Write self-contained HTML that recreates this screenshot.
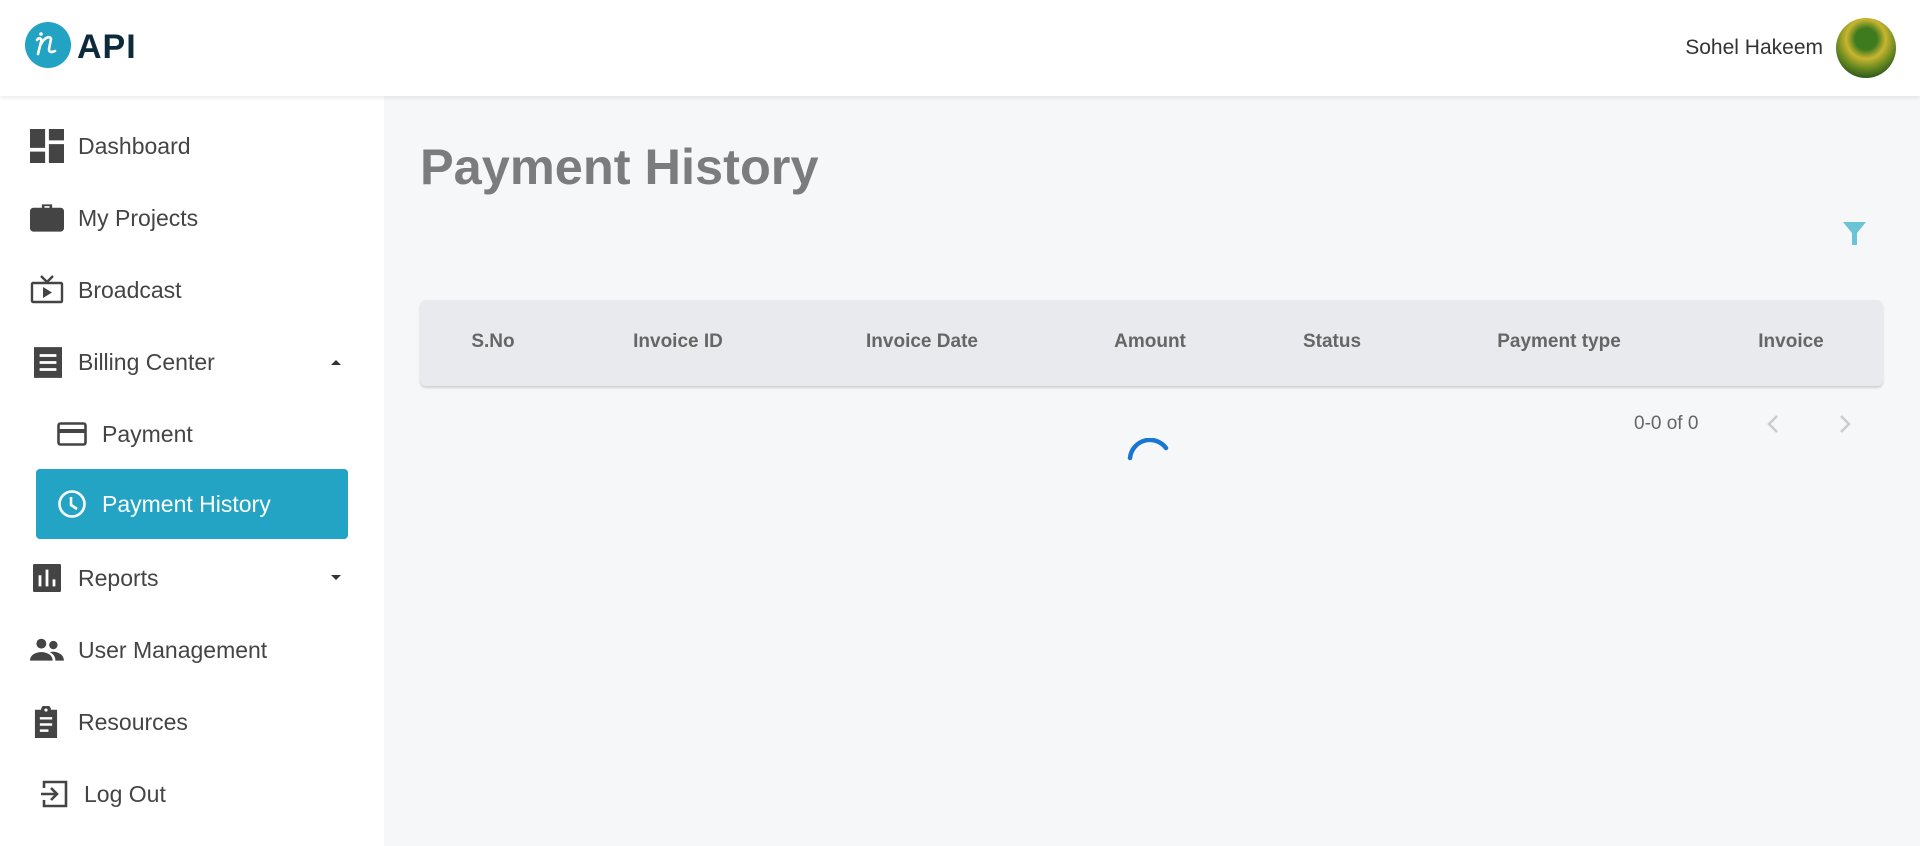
<!DOCTYPE html>
<html><head><meta charset="utf-8"><style>
*{box-sizing:border-box;margin:0;padding:0}
body{width:1920px;height:846px;overflow:hidden;background:#f6f7f9;font-family:"Liberation Sans",sans-serif;position:relative}
.hdr{position:absolute;left:0;top:0;width:1920px;height:96px;background:#fff;box-shadow:0 2px 4px rgba(0,0,0,.08);z-index:2}
.side{position:absolute;left:0;top:96px;width:384px;height:750px;background:#fff}
.it{position:absolute;left:0;height:40px;display:flex;align-items:center;font-size:23px;color:#444}
.it svg{position:absolute}
.it span{position:absolute;white-space:nowrap}
.th{position:absolute;top:300px;left:420px;width:1463px;height:86px;background:#e9eaed;border-radius:6px;box-shadow:0 2px 2px rgba(0,0,0,.15)}
.th span{position:absolute;top:31px;font-weight:bold;font-size:19px;color:#666;transform:translateX(-50%);white-space:nowrap}
</style></head><body>
<div class="hdr">
<svg style="position:absolute;left:24px;top:22px" width="48" height="46" viewBox="0 0 48 46"><circle cx="24" cy="23" r="23" fill="#22a3c4"/><path d="M13 18c2-3 5-2 4 2l-3 12M17 22c3-6 9-9 10-5l-2 10c0 3 2 4 6 2" stroke="#fff" stroke-width="2.6" fill="none" stroke-linecap="round"/><circle cx="17" cy="12" r="1.8" fill="#fff"/></svg>
<div style="position:absolute;left:77px;top:28px;font-size:34px;font-weight:bold;color:#0d2a3a;letter-spacing:1px">API</div>
<div style="position:absolute;right:97px;top:36px;font-size:21px;color:#333">Sohel Hakeem</div>
<div style="position:absolute;left:1836px;top:18px;width:60px;height:60px;border-radius:50%;background:radial-gradient(circle at 50% 35%,#3e7a1e 0 22%,#c9b530 40%,#6b8a20 60%,#1d4a1a 85%)"></div>
</div>
<div class="side">
<div class="it" style="top:30px"><svg style="left:30px" width="34" height="34" viewBox="3 3 18 18" fill="#444"><path d="M3 13h8V3H3zm0 8h8v-6H3zm10 0h8V11h-8zm0-18v6h8V3z"/></svg><span style="left:78px">Dashboard</span></div>
<div class="it" style="top:102px"><svg style="left:30px" width="34" height="28" viewBox="2 4 20 16" fill="#444"><path d="M9 4h6v2h5a2 2 0 012 2v10a2 2 0 01-2 2H4a2 2 0 01-2-2V8a2 2 0 012-2h5zm1.5 1v1h3V5z"/></svg><span style="left:78px">My Projects</span></div>
<div class="it" style="top:174px"><svg style="left:30px" width="34" height="30" viewBox="0 0 34 30" fill="none" stroke="#444" stroke-width="2.4"><rect x="2" y="8" width="30" height="19" rx="1"/><path d="M11 1l6 6 6-6"/><path d="M13 12v11l9-5.5z" fill="#444" stroke="none"/></svg><span style="left:78px">Broadcast</span></div>
<div class="it" style="top:246px"><svg style="left:34px" width="28" height="31" viewBox="2 1 20 22" fill="#444"><path d="M2 1h20v22H2zm4 5v2h12V6zm0 5v2h12v-2zm0 5v2h12v-2z"/></svg><span style="left:78px">Billing Center</span><svg style="left:330px" width="12" height="8" viewBox="0 0 12 8"><path d="M1 7l5-5 5 5z" fill="#333"/></svg></div>
<div class="it" style="top:318px"><svg style="left:57px" width="30" height="24" viewBox="0 0 30 24" fill="none" stroke="#444" stroke-width="2.6"><rect x="1.5" y="1.5" width="27" height="21" rx="2"/><path d="M1.5 9h27" stroke-width="4"/></svg><span style="left:102px">Payment</span></div>
<div style="position:absolute;left:36px;top:373px;width:312px;height:70px;background:#23a4c5;border-radius:4px"></div>
<div class="it" style="top:388px;color:#fff"><svg style="left:57px" width="30" height="30" viewBox="0 0 30 30" fill="none" stroke="#fff" stroke-width="2.6"><circle cx="15" cy="15" r="12.5"/><path d="M14 8v8l6 4"/></svg><span style="left:102px">Payment History</span></div>
<div class="it" style="top:462px"><svg style="left:33px" width="28" height="28" viewBox="2 2 20 20" fill="#444"><path d="M3 2h18a1 1 0 011 1v18a1 1 0 01-1 1H3a1 1 0 01-1-1V3a1 1 0 011-1zm3 8v8h2v-8zm5-4v12h2V6zm5 7v5h2v-5z"/></svg><span style="left:78px">Reports</span><svg style="left:330px" width="12" height="8" viewBox="0 0 12 8"><path d="M1 1l5 5 5-5z" fill="#333"/></svg></div>
<div class="it" style="top:534px"><svg style="left:30px" width="34" height="24" viewBox="0 0 24 17" fill="#444"><circle cx="8" cy="4" r="3.5"/><circle cx="16.5" cy="5" r="3"/><path d="M0 16c0-4 4-6 8-6s8 2 8 6zM14 10c4-1 10 1 10 6h-6c0-3-2-5-4-6z"/></svg><span style="left:78px">User Management</span></div>
<div class="it" style="top:606px"><svg style="left:33px" width="26" height="32" viewBox="3 0 18 26" fill="#444"><path d="M3 3h5a4 4 0 018 0h5v23H3zm9-1a1.3 1.3 0 100 2.6A1.3 1.3 0 0012 2zM7 9v2h10V9zm0 5v2h10v-2zm0 5v2h7v-2z"/></svg><span style="left:78px">Resources</span></div>
<div class="it" style="top:678px"><svg style="left:39px" width="30" height="30" viewBox="0 0 30 30" fill="none" stroke="#444" stroke-width="2.6"><path d="M5 9V3h22v24H5v-6M2 15h16M12 9l6 6-6 6"/></svg><span style="left:84px">Log Out</span></div>
</div>
<div style="position:absolute;left:420px;top:137px;font-size:50.5px;font-weight:bold;color:#7c7c7e">Payment History</div>
<svg style="position:absolute;left:1843px;top:222px" width="23" height="24" viewBox="0 0 23 24"><path d="M0 0h23L14 11v12H9V11z" fill="#6bc3d8"/></svg>
<div class="th"><span style="left:73px">S.No</span><span style="left:258px">Invoice ID</span><span style="left:502px">Invoice Date</span><span style="left:730px">Amount</span><span style="left:912px">Status</span><span style="left:1139px">Payment type</span><span style="left:1371px">Invoice</span></div>
<div style="position:absolute;left:1634px;top:413px;font-size:19px;color:#666">0-0 of 0</div>
<svg style="position:absolute;left:1766px;top:414px" width="14" height="20" viewBox="0 0 14 20"><path d="M11 2L3 10l8 8" stroke="#ccc" stroke-width="2.5" fill="none"/></svg>
<svg style="position:absolute;left:1838px;top:414px" width="14" height="20" viewBox="0 0 14 20"><path d="M3 2l8 8-8 8" stroke="#ccc" stroke-width="2.5" fill="none"/></svg>
<svg style="position:absolute;left:1125px;top:438px" width="52" height="30" viewBox="0 0 52 30"><path d="M5 20A20 20 0 0 1 41 10" stroke="#1976d2" stroke-width="4.5" fill="none" stroke-linecap="round"/></svg>
</body></html>
